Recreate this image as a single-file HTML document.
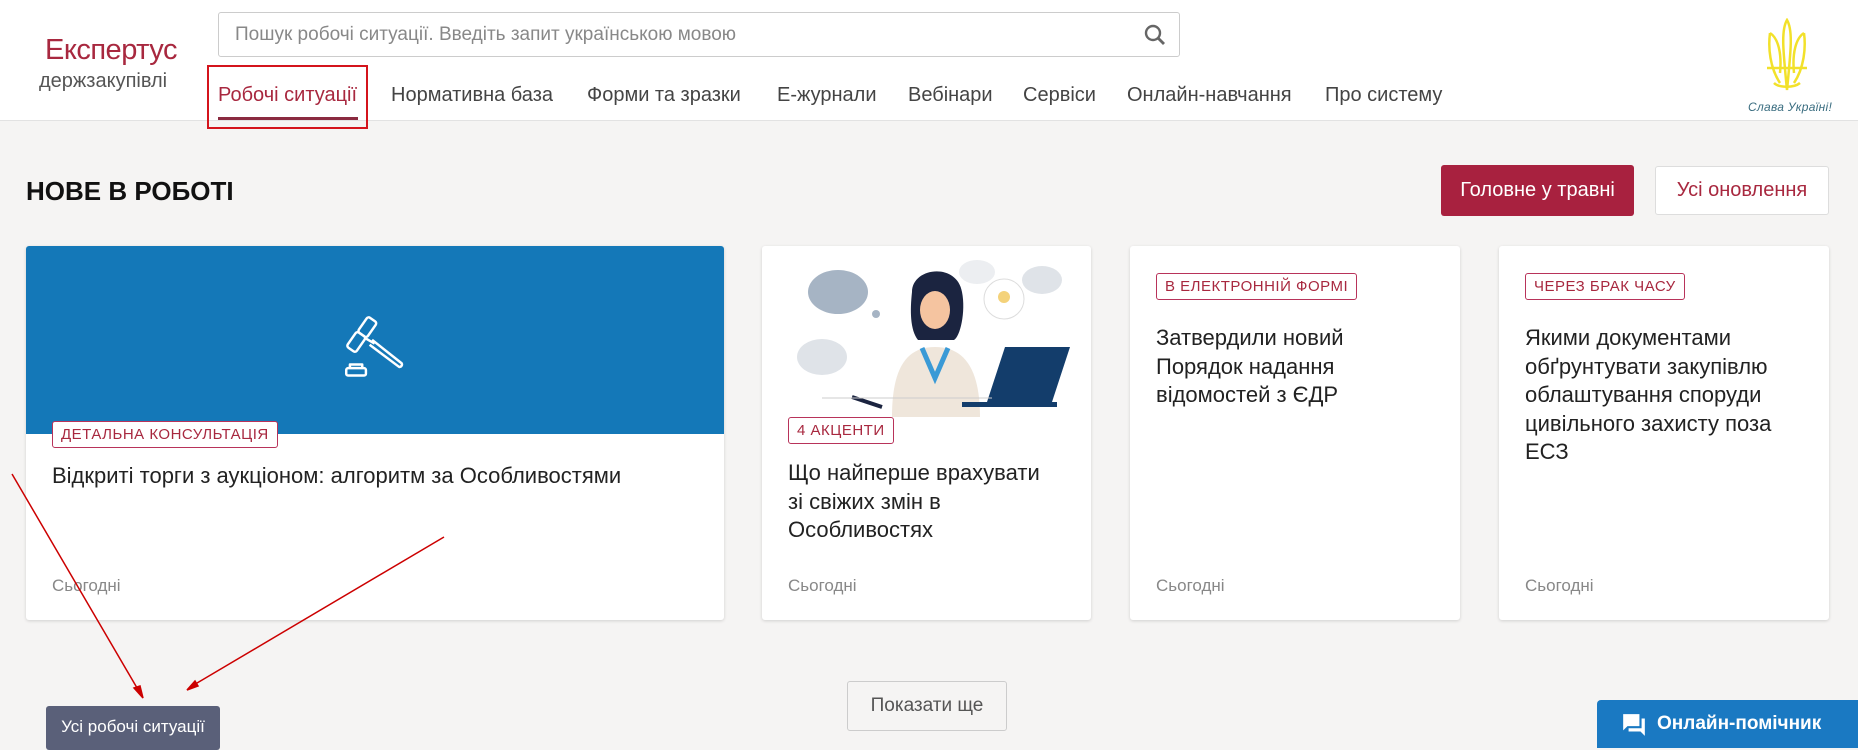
<!DOCTYPE html>
<html><head><meta charset="utf-8"><style>
*{box-sizing:border-box;margin:0;padding:0}
body{width:1858px;height:748px;overflow:hidden;background:#f5f4f3;font-family:"Liberation Sans",sans-serif;position:relative;color:#222}
.hdr{position:absolute;left:0;top:0;width:1858px;height:121px;background:#fff;border-bottom:1px solid #e2e2e2}
.abs{position:absolute}
.logo1{left:45px;top:34px;font-size:29px;color:#a8283f;letter-spacing:-0.5px}
.logo2{left:39px;top:70px;font-size:20px;color:#555}
.search{left:218px;top:12px;width:962px;height:45px;border:1px solid #ccc;border-radius:3px}
.search span{position:absolute;left:16px;top:11px;font-size:19px;color:#888}
.nav{top:84px;font-size:20px;color:#444}
.card{position:absolute;top:246px;height:374px;background:#fff;border-radius:3px;box-shadow:0 1px 3px rgba(0,0,0,.15)}
.badge{position:absolute;border:1px solid #b8335a;border-radius:3px;color:#a8283f;font-size:15px;letter-spacing:.5px;padding:4px 8px;background:#fff;line-height:17px}
.ttl{position:absolute;font-size:22px;line-height:28.5px;color:#222}
.date{position:absolute;top:330px;font-size:17px;color:#888}
</style></head><body>
<div class="hdr">
<div class="abs logo1">Експертус</div>
<div class="abs logo2">держзакупівлі</div>
<div class="abs search"><span>Пошук робочі ситуації. Введіть запит українською мовою</span>
<svg class="abs" style="right:12px;top:10px" width="24" height="24" viewBox="0 0 24 24"><circle cx="10" cy="10" r="7" fill="none" stroke="#666" stroke-width="2.4"/><path d="M15 15l6 6" stroke="#666" stroke-width="2.8"/></svg></div>
<div class="abs" style="left:207px;top:65px;width:161px;height:64px;border:2px solid #d4141c"></div>
<div class="abs nav" style="left:218px;color:#a8283f">Робочі ситуації</div>
<div class="abs" style="left:218px;top:117px;width:140px;height:3px;background:#8a2a40"></div>
<div class="abs nav" style="left:391px">Нормативна база</div>
<div class="abs nav" style="left:587px">Форми та зразки</div>
<div class="abs nav" style="left:777px">Е-журнали</div>
<div class="abs nav" style="left:908px">Вебінари</div>
<div class="abs nav" style="left:1023px">Сервіси</div>
<div class="abs nav" style="left:1127px">Онлайн-навчання</div>
<div class="abs nav" style="left:1325px">Про систему</div>
<svg class="abs" style="left:1762px;top:18px" width="50" height="80" viewBox="0 0 50 80"><g fill="none" stroke="#f2e12a" stroke-width="2.5"><path d="M25 2c-6 10-4 30 0 70 4-40 6-60 0-70z"/><path d="M8 15c-2 15 0 35 10 50M42 15c2 15 0 35-10 50"/><path d="M8 15c8 5 12 20 10 40M42 15c-8 5-12 20-10 40"/><path d="M5 50h40M12 65c5 5 20 5 26 0"/></g></svg>
<div class="abs" style="left:1748px;top:100px;font-size:12px;font-style:italic;color:#3a6d80;letter-spacing:.3px">Слава Україні!</div>
</div>

<div class="abs" style="left:26px;top:176px;font-size:26px;font-weight:bold;color:#111">НОВЕ В РОБОТІ</div>
<div class="abs" style="left:1441px;top:165px;width:193px;height:51px;background:#a8213f;border-radius:3px;color:#fff;font-size:20px;text-align:center;line-height:51px">Головне у травні</div>
<div class="abs" style="left:1655px;top:166px;width:174px;height:49px;background:#fff;border:1px solid #ddd;border-radius:3px;color:#a8283f;font-size:20px;text-align:center;line-height:47px">Усі оновлення</div>

<div class="card" style="left:26px;width:698px">
<div class="abs" style="left:0;top:0;width:698px;height:188px;background:#1478b8;border-radius:3px 3px 0 0"></div>
<svg class="abs" style="left:314px;top:68px" width="74" height="64" viewBox="0 0 60 52"><g fill="none" stroke="#fff" stroke-width="2" stroke-linejoin="round"><rect x="18" y="3" width="9" height="15" rx="2" transform="rotate(35 22 10)"/><rect x="9" y="15" width="9" height="15" rx="2" transform="rotate(35 13 22)"/><path d="M21 20l7 4M26 21l24 19a2 2 0 0 1-2 3L24 25"/><rect x="5" y="44" width="16" height="6" rx="1.5"/><path d="M8 44v-3h10v3"/></g></svg>
<div class="badge" style="left:26px;top:175px">ДЕТАЛЬНА КОНСУЛЬТАЦІЯ</div>
<div class="ttl" style="left:26px;top:216px">Відкриті торги з аукціоном: алгоритм за Особливостями</div>
<div class="date" style="left:26px">Сьогодні</div>
</div>

<div class="card" style="left:762px;width:329px">
<svg class="abs" style="left:20px;top:6px" width="290" height="165" viewBox="0 0 290 165"><g>
<ellipse cx="56" cy="40" rx="30" ry="22" fill="#a6b4c4"/><circle cx="94" cy="62" r="4" fill="#a6b4c4"/>
<ellipse cx="40" cy="105" rx="25" ry="18" fill="#dfe3e8"/>
<ellipse cx="195" cy="20" rx="18" ry="12" fill="#eceef1"/>
<ellipse cx="260" cy="28" rx="20" ry="14" fill="#dfe3e8"/>
<ellipse cx="240" cy="105" rx="12" ry="9" fill="#eceef1"/>
<circle cx="222" cy="47" r="20" fill="#fff" stroke="#ddd"/><circle cx="222" cy="45" r="6" fill="#f4d27a"/>
<path d="M130 40c0-25 45-30 50 0 4 20-2 45-8 48h-36c-8-10-8-30-6-48z" fill="#1b2440"/>
<ellipse cx="153" cy="58" rx="15" ry="19" fill="#f5c4a0"/>
<path d="M110 165c0-50 15-70 43-70s45 20 45 70z" fill="#efe6db"/>
<path d="M140 96l13 30 13-30" fill="none" stroke="#3a9ad6" stroke-width="5"/>
<path d="M70 145l30 10" stroke="#1b2440" stroke-width="4"/>
<path d="M205 150l18-55h65l-18 55z" fill="#133d6b"/><rect x="180" y="150" width="95" height="5" fill="#133d6b"/>
<path d="M40 146h170" stroke="#ccc"/></g></svg>
<div class="badge" style="left:26px;top:171px">4 АКЦЕНТИ</div>
<div class="ttl" style="left:26px;top:213px">Що найперше врахувати<br>зі свіжих змін в<br>Особливостях</div>
<div class="date" style="left:26px">Сьогодні</div>
</div>

<div class="card" style="left:1130px;width:330px">
<div class="badge" style="left:26px;top:27px">В ЕЛЕКТРОННІЙ ФОРМІ</div>
<div class="ttl" style="left:26px;top:78px">Затвердили новий<br>Порядок надання<br>відомостей з ЄДР</div>
<div class="date" style="left:26px">Сьогодні</div>
</div>

<div class="card" style="left:1499px;width:330px">
<div class="badge" style="left:26px;top:27px">ЧЕРЕЗ БРАК ЧАСУ</div>
<div class="ttl" style="left:26px;top:78px">Якими документами<br>обґрунтувати закупівлю<br>облаштування споруди<br>цивільного захисту поза<br>ЕСЗ</div>
<div class="date" style="left:26px">Сьогодні</div>
</div>

<div class="abs" style="left:847px;top:681px;width:160px;height:50px;border:1px solid #ccc;border-radius:3px;font-size:19px;color:#555;text-align:center;line-height:48px">Показати ще</div>
<div class="abs" style="left:46px;top:706px;width:174px;height:44px;background:#5a6079;border-radius:3px;color:#fff;font-size:17px;text-align:center;line-height:42px">Усі робочі ситуації</div>
<div class="abs" style="left:1597px;top:700px;width:261px;height:48px;background:#1a79c2;border-radius:4px 0 0 0;color:#fff;font-size:19px;font-weight:bold;line-height:48px;padding-left:60px">Онлайн-помічник</div>
<svg class="abs" style="left:1621px;top:712px" width="26" height="26" viewBox="0 0 24 24"><path d="M2 2h15v11H6l-4 4z" fill="#fff"/><path d="M19 6h3v16l-4-4H7v-3h12z" fill="#fff"/></svg>

<svg class="abs" style="left:0;top:0" width="1858" height="748"><g stroke="#c00" stroke-width="1.5" fill="#c00"><line x1="12" y1="474" x2="140" y2="693"/><path d="M143 698l-9-10 6-2z"/><line x1="444" y1="537" x2="192" y2="686"/><path d="M187 690l8-9 3 5z"/></g></svg>
</body></html>
